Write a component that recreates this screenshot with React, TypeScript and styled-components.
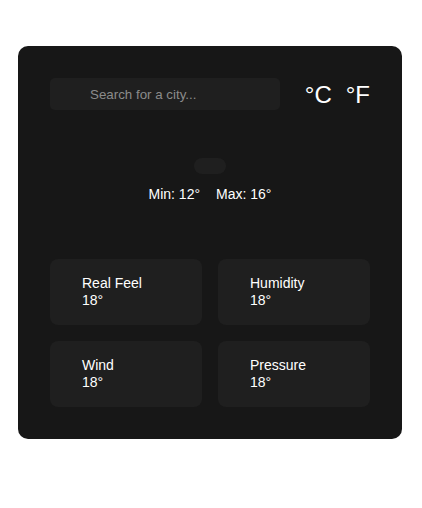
import React from 'react';
import styled, { createGlobalStyle } from 'styled-components';

type Detail = { label: string; value: string };

const details: Detail[] = [
	{ label: 'Real Feel', value: '18°' },
	{ label: 'Humidity', value: '18°' },
	{ label: 'Wind', value: '18°' },
	{ label: 'Pressure', value: '18°' },
];

const App: React.FC = () => {
	return (
		<>
			<GlobalStyle />
			<Card>
				<TopBar>
					<SearchInput type="text" placeholder="Search for a city..." />
					<Units>
						<Unit>°C</Unit>
						<Unit>°F</Unit>
					</Units>
				</TopBar>
				<Current>
					<Pill />
					<MinMax>
						<span>Min: 12°</span>
						<span>Max: 16°</span>
					</MinMax>
				</Current>
				<DetailGrid>
					{details.map((d) => (
						<DetailBox key={d.label}>
							<DetailLabel>{d.label}</DetailLabel>
							<DetailValue>{d.value}</DetailValue>
						</DetailBox>
					))}
				</DetailGrid>
			</Card>
		</>
	);
};

export default App;

const GlobalStyle = createGlobalStyle`
	body {
		margin: 0;
		background: #fff;
		font-family: 'Liberation Sans', Arial, sans-serif;
	}
`;

const Card = styled.div`
	margin: 46px 0 0 18px;
	width: 384px;
	box-sizing: border-box;
	padding: 32px;
	background: #171717;
	border-radius: 10px;
	color: #fff;
`;

const TopBar = styled.div`
	display: flex;
	align-items: center;
	justify-content: space-between;
`;

const SearchInput = styled.input`
	width: 230px;
	height: 32px;
	box-sizing: border-box;
	padding: 0 0 0 40px;
	border: 0;
	border-radius: 5px;
	background: #1f1f1f;
	color: #fff;
	font-family: 'Liberation Sans', Arial, sans-serif;
	font-size: 13.333px;
	outline: none;

	&::placeholder {
		color: #8b8b8b;
	}
`;

const Units = styled.div`
	display: flex;
	gap: 14px;
	padding-top: 2px;
`;

const Unit = styled.span`
	font-size: 24px;
	line-height: 28px;
`;

const Current = styled.div`
	display: flex;
	flex-direction: column;
	align-items: center;
	margin-top: 48px;
`;

const Pill = styled.div`
	width: 32px;
	height: 16px;
	border-radius: 8px;
	background: #1f1f1f;
`;

const MinMax = styled.div`
	display: flex;
	gap: 16px;
	margin-top: 12px;
	font-size: 14px;
	line-height: 16px;
`;

const DetailGrid = styled.div`
	display: grid;
	grid-template-columns: 1fr 1fr;
	gap: 16px;
	margin-top: 57px;
`;

const DetailBox = styled.div`
	height: 66px;
	box-sizing: border-box;
	padding: 16px 32px;
	border-radius: 8px;
	background: #1f1f1f;
	font-size: 14px;
	line-height: 17px;
`;

const DetailLabel = styled.div``;

const DetailValue = styled.div``;
